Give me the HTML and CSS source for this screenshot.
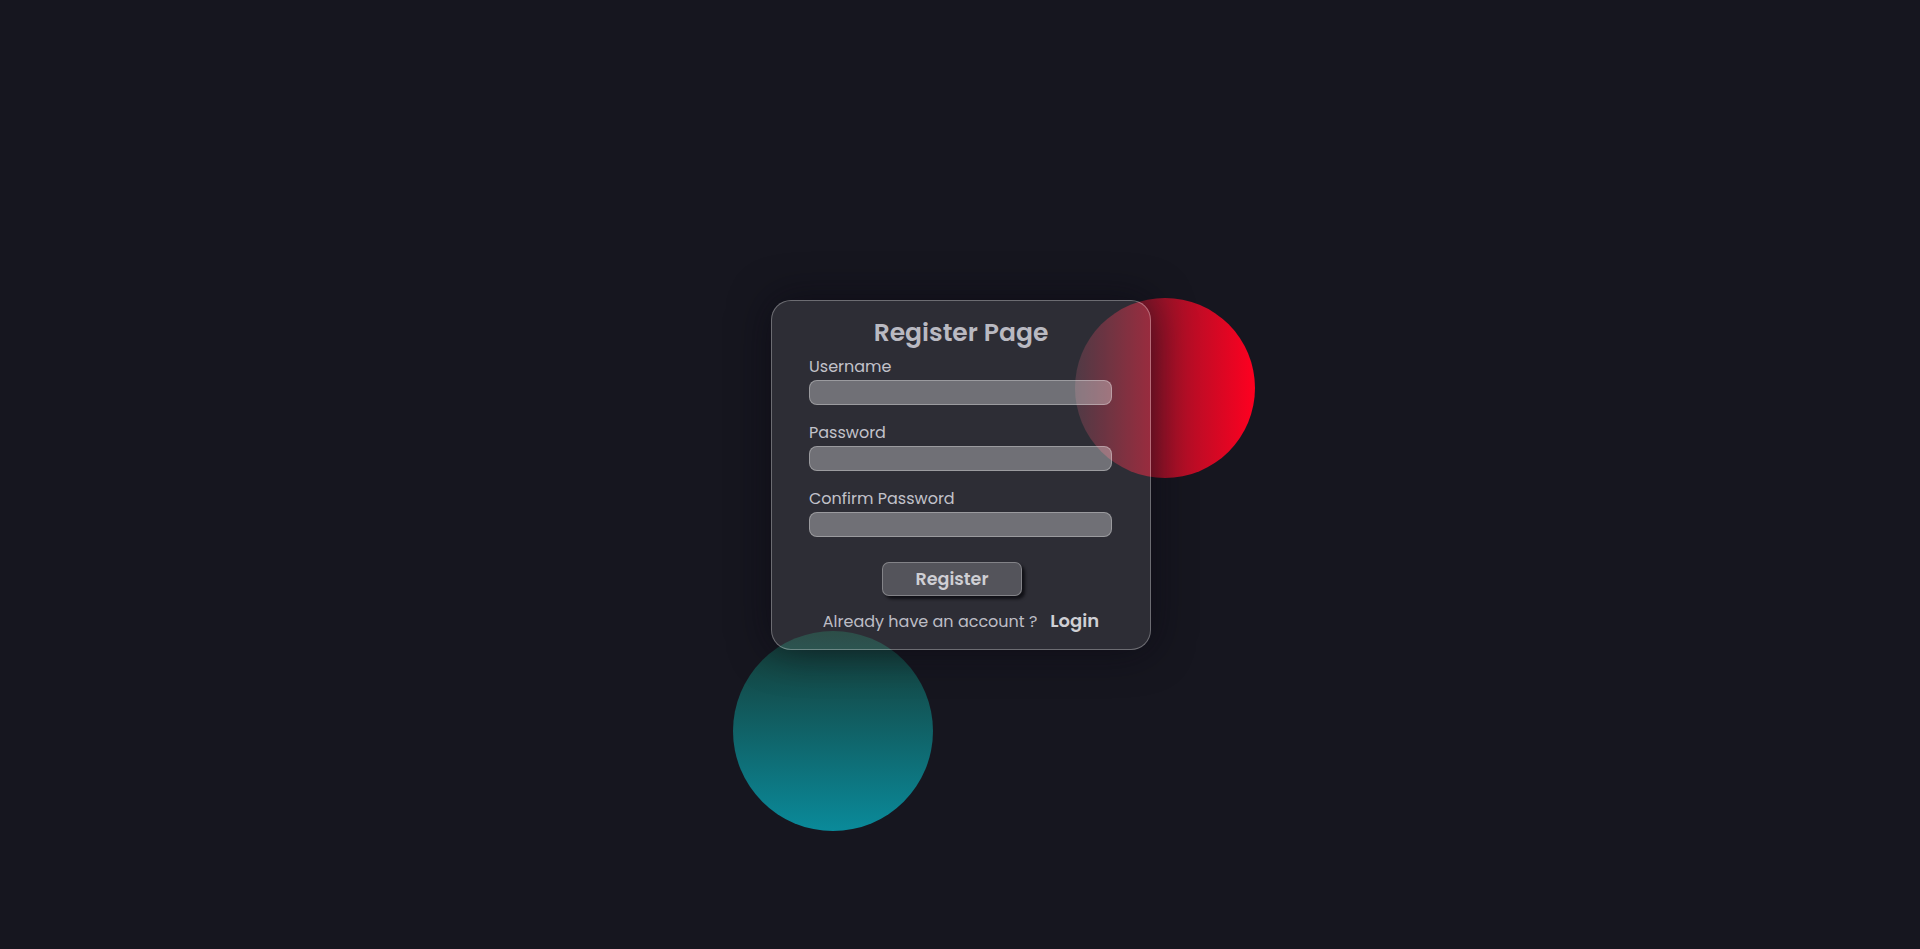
FILE: index.html
```html
<!DOCTYPE html>
<html lang="en">
<head>
<meta charset="utf-8">
<title>Register Page</title>
<link rel="stylesheet" href="styles.css">
</head>
<body>
<main class="stage">
  <div class="scene">
    <div class="shape shape-red"></div>
    <div class="shape shape-teal"></div>
    <form class="card">
      <h1 class="title">Register Page</h1>
      <label class="label" for="u">Username</label>
      <input class="field" id="u" type="text">
      <label class="label" for="p">Password</label>
      <input class="field" id="p" type="password">
      <label class="label" for="c">Confirm Password</label>
      <input class="field" id="c" type="password">
      <button class="btn" type="button">Register</button>
      <p class="switch"><span class="switch-text">Already have an account ?</span><a class="switch-link" href="#">Login</a></p>
    </form>
  </div>
</main>
</body>
</html>
```
FILE: styles.css
```css
* { box-sizing: border-box; }
html, body { margin: 0; padding: 0; }
body {
  background: #16161f;
  font-family: "Poppins", "Open Sans", "Noto Sans", sans-serif;
  min-height: 100vh;
}
.stage {
  min-height: 100vh;
  display: flex;
  align-items: center;
  justify-content: center;
  padding-left: 2px;
}
.scene {
  position: relative;
  width: 380px;
  height: 350px;
}
.shape {
  position: absolute;
  border-radius: 50%;
}
.shape-red {
  left: 304px;
  top: -2px;
  width: 180px;
  height: 180px;
  background: linear-gradient(to right, #3c2430, #ff0020);
}
.shape-teal {
  left: -38px;
  top: 331px;
  width: 200px;
  height: 200px;
  background: linear-gradient(to bottom, #163a34, #0a8a9a);
}
.card {
  position: relative;
  width: 380px;
  height: 350px;
  border-radius: 20px;
  background: rgba(255, 255, 255, 0.1);
  border: 1px solid rgba(255, 255, 255, 0.3);
  box-shadow: 0 0 40px rgba(8, 7, 16, 0.6);
  padding: 14px 37px 0 37px;
  display: flex;
  flex-direction: column;
  margin: 0;
}
.title {
  margin: 0;
  font-size: 25px;
  line-height: 36px;
  font-weight: 600;
  color: #b9b9c1;
  text-align: center;
}
.label {
  display: block;
  margin-top: 18px;
  font-size: 16px;
  line-height: 20px;
  color: #c2c2ca;
}
.title + .label { margin-top: 6px; }
.field {
  display: block;
  margin-top: 3px;
  width: 303px;
  height: 25px;
  border-radius: 8px;
  border: 1px solid rgba(255, 255, 255, 0.3);
  background: rgba(255, 255, 255, 0.32);
  outline: none;
}
.btn {
  margin-top: 25px;
  margin-left: 73px;
  width: 140px;
  height: 34px;
  border-radius: 7px;
  border: 1px solid rgba(255, 255, 255, 0.28);
  background: rgba(255, 255, 255, 0.19);
  box-shadow: 3px 3px 3px rgba(5, 5, 10, 0.7);
  color: #cfcfd4;
  font-family: inherit;
  font-size: 17.5px;
  font-weight: 600;
  padding: 0;
}
.switch {
  margin: 14px 0 0 0;
  display: flex;
  justify-content: center;
  align-items: baseline;
  gap: 13px;
  line-height: 22px;
}
.switch-text {
  font-size: 16px;
  color: #bdbdc5;
}
.switch-link {
  font-size: 18px;
  font-weight: 600;
  color: #cfcfd4;
  text-decoration: none;
}
```
